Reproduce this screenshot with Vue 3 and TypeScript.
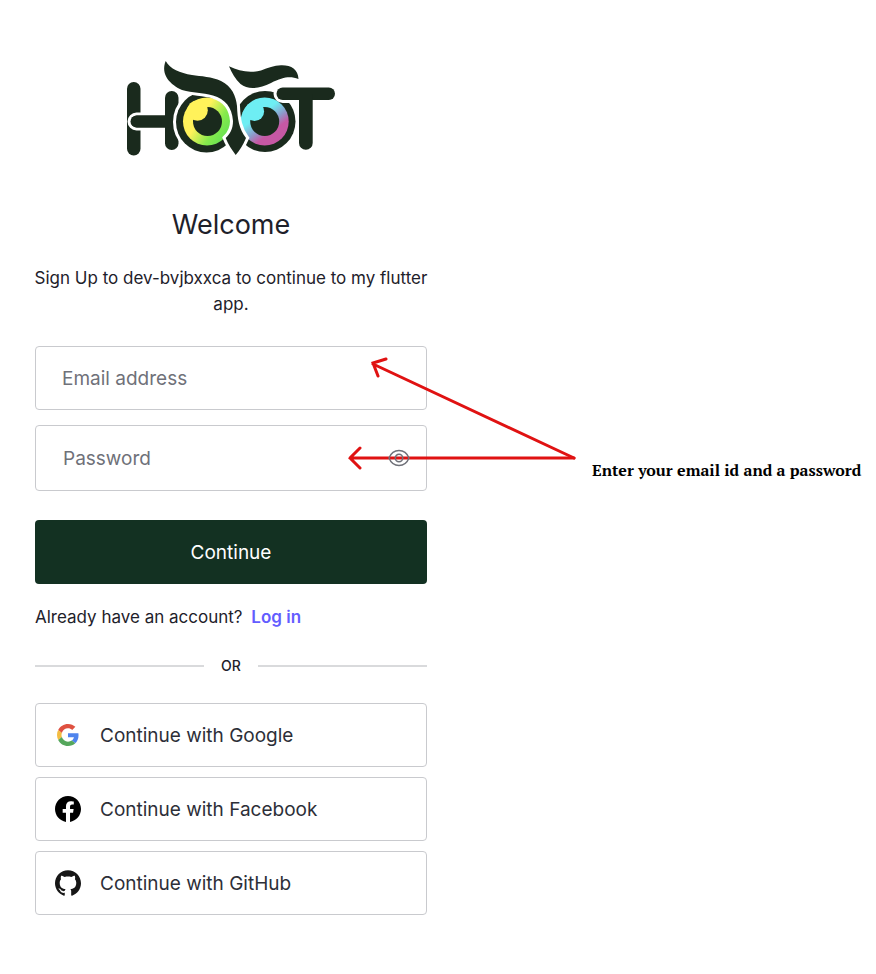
<script setup lang="ts">
import { ref } from 'vue'

type Provider = 'Google' | 'Facebook' | 'GitHub'

const email = ref('')
const password = ref('')
const passwordVisible = ref(false)
const providers: Provider[] = ['Google', 'Facebook', 'GitHub']
</script>

<template>
  <main class="page">
    <section class="signup">
      <svg class="logo" viewBox="120 50 225 115" role="img" aria-label="Hoot">
        <defs>
          <linearGradient id="iris-left" x1="0.15" y1="0.3" x2="0.85" y2="0.75">
            <stop offset="0.3" stop-color="#fff25a" />
            <stop offset="0.75" stop-color="#86ea4c" />
            <stop offset="1" stop-color="#6fe451" />
          </linearGradient>
          <linearGradient id="iris-right" x1="0.2" y1="0.1" x2="0.75" y2="0.85">
            <stop offset="0.35" stop-color="#6eeef3" />
            <stop offset="0.62" stop-color="#8d9bcb" />
            <stop offset="0.82" stop-color="#c658a4" />
          </linearGradient>
        </defs>
        <g fill="#1a2a1d">
          <rect x="128" y="82" width="13.5" height="73.5" rx="6.7" />
          <rect class="halo" x="131.5" y="115.5" width="44" height="12" rx="6" />
          <rect x="166" y="91" width="13.5" height="59" rx="6.7" />
          <rect x="132" y="115.5" width="42" height="12" rx="6" />
          <circle class="halo" cx="207.5" cy="122" r="30.5" />
          <circle cx="208" cy="121.5" r="24" fill="url(#iris-left)" />
          <circle cx="208.5" cy="121.5" r="14.5" />
          <circle cx="198.5" cy="110.500" r="10.300" fill="#fff25a" />
          <circle class="halo" cx="266" cy="121.500" r="30.500" />
          <circle cx="265.700" cy="121.500" r="24" fill="url(#iris-right)" />
          <circle cx="265.700" cy="121.500" r="14.500" />
          <circle cx="255.500" cy="111.500" r="9.600" fill="#6eeef3" />
          <path class="halo" d="M166.700 61C171 69 181 73 193 75C202 76.500 213 76.500 222 81C233 86.500 237 96 238 106C238.500 119 240 129 247 138C244 145 241 150 236.700 155C233 150 229 144 226.700 138C231 134 234 129 234 121C233 107 226 99 214 95.500C203 92 194 93.500 183 90C172 85 161 75 166.700 61Z" />
          <path class="halo" d="M230 66.300C240 71 250 73.500 262 70.500C269 68 275 65.500 282 65.300C292 65 299 69 299.500 79C291 76 284 77 272 83C260 89 249 90 241.500 84C236 79 233 73 230 66.300Z" />
          <rect class="halo" x="277.500" y="87.500" width="58.500" height="12.500" rx="6.200" />
          <path d="M300 94H313.700V143A6.800 6.800 0 0 1 300 143Z" />
        </g>
      </svg>

      <h1>Welcome</h1>
      <p class="intro">Sign Up to dev-bvjbxxca to continue to my flutter app.</p>

      <form @submit.prevent>
        <div class="field">
          <label v-show="!email" for="email">Email address</label>
          <input id="email" v-model="email" type="email" autocomplete="email" />
        </div>
        <div class="field field-password">
          <label v-show="!password" for="password">Password</label>
          <input
            id="password"
            v-model="password"
            :type="passwordVisible ? 'text' : 'password'"
            autocomplete="new-password"
          />
          <button
            class="reveal"
            type="button"
            aria-label="Show password"
            :aria-pressed="passwordVisible"
            @click="passwordVisible = !passwordVisible"
          >
            <svg viewBox="0 0 22 18" aria-hidden="true">
              <path d="M1 9C3 4 6.500 1.500 11 1.500S19 4 21 9C19 14 15.500 16.500 11 16.500S3 14 1 9Z" />
              <circle cx="11" cy="9" r="3.700" />
            </svg>
          </button>
        </div>
        <button class="submit" type="submit">Continue</button>
      </form>

      <p class="login">Already have an account? <a href="#login">Log in</a></p>
      <div class="divider"><span>OR</span></div>

      <div class="providers">
        <button v-for="provider in providers" :key="provider" class="provider" type="button">
          <svg v-if="provider === 'Google'" class="google" viewBox="0 0 48 48" aria-hidden="true">
            <path fill="#df5140" d="M24 9.500c3.540 0 6.710 1.220 9.210 3.600l6.850-6.850C35.900 2.380 30.470 0 24 0 14.620 0 6.510 5.380 2.560 13.220l7.980 6.190C12.430 13.720 17.740 9.500 24 9.500z" />
            <path fill="#4f84ed" d="M46.980 24.550c0-1.570-.15-3.090-.38-4.550H24v9.020h12.940c-.58 2.960-2.260 5.480-4.780 7.180l7.730 6c4.510-4.180 7.090-10.360 7.090-17.650z" />
            <path fill="#f4bd42" d="M10.530 28.590c-.48-1.450-.76-2.990-.76-4.590s.27-3.140.76-4.590l-7.980-6.190C.92 16.460 0 20.120 0 24c0 3.880.92 7.540 2.560 10.780l7.970-6.190z" />
            <path fill="#55a75c" d="M24 48c6.480 0 11.930-2.130 15.890-5.810l-7.730-6c-2.150 1.450-4.920 2.300-8.160 2.300-6.260 0-11.570-4.220-13.470-9.910l-7.980 6.190C6.510 42.620 14.620 48 24 48z" />
          </svg>
          <svg v-else-if="provider === 'Facebook'" viewBox="0 0 24 24" aria-hidden="true">
            <path fill="#000" d="M24 12.073c0-6.627-5.373-12-12-12s-12 5.373-12 12c0 5.990 4.388 10.954 10.125 11.854v-8.385H7.078v-3.470h3.047V9.430c0-3.007 1.792-4.669 4.533-4.669 1.312 0 2.686.235 2.686.235v2.953H15.830c-1.491 0-1.956.925-1.956 1.874v2.250h3.328l-.532 3.470h-2.796v8.385C19.612 23.027 24 18.062 24 12.073z" />
          </svg>
          <svg v-else viewBox="0 0 24 24" aria-hidden="true">
            <path fill="#171717" d="M12 .297c-6.630 0-12 5.373-12 12 0 5.303 3.438 9.800 8.205 11.385.6.113.820-.258.820-.577 0-.285-.010-1.040-.015-2.040-3.338.724-4.042-1.610-4.042-1.610C4.422 18.070 3.633 17.700 3.633 17.700c-1.087-.744.084-.729.084-.729 1.205.084 1.838 1.236 1.838 1.236 1.070 1.835 2.809 1.305 3.495.998.108-.776.417-1.305.760-1.605-2.665-.300-5.466-1.332-5.466-5.930 0-1.310.465-2.380 1.235-3.220-.135-.303-.540-1.523.105-3.176 0 0 1.005-.322 3.300 1.230.960-.267 1.980-.399 3-.405 1.020.006 2.040.138 3 .405 2.280-1.552 3.285-1.230 3.285-1.230.645 1.653.240 2.873.120 3.176.765.840 1.230 1.910 1.230 3.220 0 4.610-2.805 5.625-5.475 5.920.420.360.810 1.096.810 2.220 0 1.606-.015 2.896-.015 3.286 0 .315.210.690.825.570C20.565 22.092 24 17.592 24 12.297c0-6.627-5.373-12-12-12" />
          </svg>
          <span>Continue with {{ provider }}</span>
        </button>
      </div>
    </section>

    <aside class="note">Enter your email id and a password</aside>

    <svg class="arrows" viewBox="0 0 230 115" aria-hidden="true">
      <path d="M228 103 27 9M40 4 27 8 32 21" />
      <path d="M228 103H4M14 93 4 103 14 113" />
    </svg>
  </main>
</template>

<style>
body {
  margin: 0;
  background: #fff;
}
</style>

<style scoped>
.page {
  position: relative;
  display: grid;
  grid-template-columns: minmax(0, 392fr) minmax(0, 449fr);
  padding: 50px 0 60px 35px;
  font-family: Inter, "Liberation Sans", sans-serif;
  color: #1e212a;
}

.signup {
  display: flex;
  flex-direction: column;
}

.logo {
  align-self: center;
  width: 225px;
  height: 115px;
}

.halo {
  stroke: #fff;
  stroke-width: 6px;
  paint-order: stroke;
}

h1 {
  margin: 40px 0 0;
  font-size: 27px;
  font-weight: 400;
  line-height: 40px;
  text-align: center;
}

.intro {
  margin: 20px -8px 0;
  font-size: 17px;
  line-height: 26px;
  text-align: center;
}

form {
  display: flex;
  flex-direction: column;
  margin-top: 29px;
}

.field {
  display: grid;
  align-items: center;
  height: 64px;
}

.field label,
.field input {
  grid-area: 1 / 1;
}

.field label {
  z-index: 1;
  justify-self: start;
  padding-left: 27px;
  font-size: 19px;
  color: #6f7179;
}

.field input {
  box-sizing: border-box;
  width: 100%;
  height: 100%;
  padding: 0 27px;
  border: 1px solid #c9cace;
  border-radius: 4px;
  background: #fff;
  font: inherit;
  font-size: 19px;
  color: inherit;
}

.field-password {
  height: 66px;
  margin-top: 15px;
}

.field-password label {
  padding-left: 28px;
}

.field-password input {
  padding-right: 56px;
}

.reveal {
  grid-area: 1 / 1;
  z-index: 1;
  justify-self: end;
  display: flex;
  margin-right: 17px;
  padding: 0;
  border: 0;
  background: none;
}

.reveal svg {
  width: 22px;
  height: 18px;
  fill: none;
  stroke: #6f7179;
  stroke-width: 1.5;
}

.submit {
  height: 64px;
  margin-top: 29px;
  border: 0;
  border-radius: 4px;
  background: #133122;
  font: inherit;
  font-size: 19px;
  color: #fff;
}

.login {
  margin: 20px 0 0;
  font-size: 17px;
  line-height: 26px;
}

.login a {
  margin-left: 4px;
  font-weight: 600;
  color: #635dff;
  text-decoration: none;
}

.divider {
  display: flex;
  align-items: center;
  gap: 17px;
  margin-top: 26px;
  font-size: 14px;
  font-weight: 500;
  line-height: 20px;
}

.divider::before,
.divider::after {
  flex: 1;
  height: 2px;
  background: #d9dadc;
  content: "";
}

.providers {
  display: flex;
  flex-direction: column;
  gap: 10px;
  margin-top: 27px;
}

.provider {
  display: flex;
  align-items: center;
  gap: 19px;
  height: 64px;
  padding: 0 19px;
  border: 1px solid #c9cace;
  border-radius: 4px;
  background: #fff;
  font: inherit;
  font-size: 19px;
  color: #2d2f38;
}

.provider svg {
  width: 26px;
  height: 26px;
}

.provider .google {
  box-sizing: border-box;
  padding: 2px;
}

.note {
  margin: 408px 0 0 165px;
  font-family: "PT Serif", "Noto Serif", "Liberation Serif", serif;
  font-size: 16px;
  font-weight: 700;
  line-height: 24px;
  white-space: nowrap;
  color: #000;
}

.arrows {
  position: absolute;
  top: 355px;
  left: 346px;
  width: 230px;
  height: 115px;
  fill: none;
  stroke: #e01212;
  stroke-width: 3;
  stroke-linecap: round;
  pointer-events: none;
}
</style>
